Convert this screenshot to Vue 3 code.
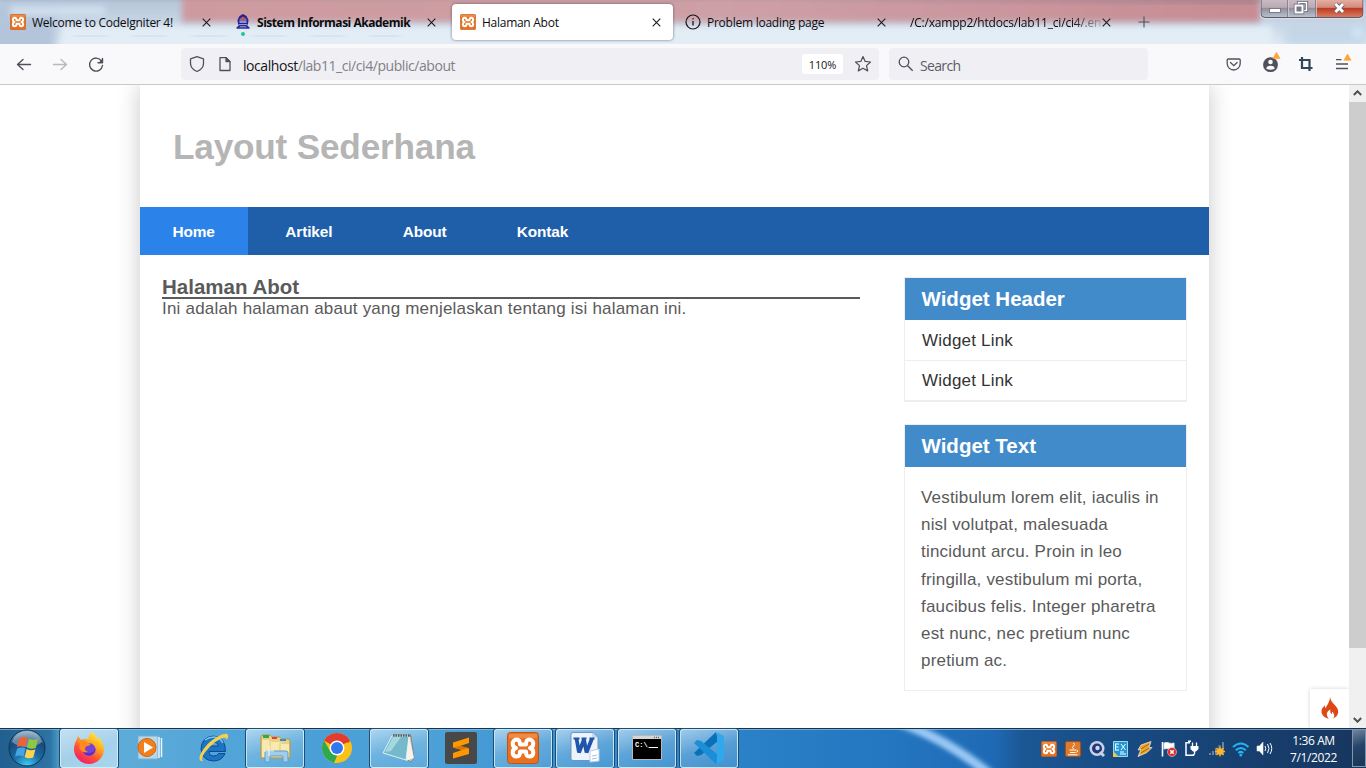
<script setup>
const tabs = [
  { title: 'Welcome to CodeIgniter 4!', icon: 'xampp', cls: 't1' },
  { title: 'Sistem Informasi Akademik', icon: 'campus', cls: 't2' },
  { title: 'Halaman Abot', icon: 'xampp', cls: 't3 active' },
  { title: 'Problem loading page', icon: 'info', cls: 't4' },
  { title: '/C:/xampp2/htdocs/lab11_ci/ci4/.en', icon: '', cls: 't5' },
]
const menu = ['Home', 'Artikel', 'About', 'Kontak']
const apps = [
  { id: 'firefox', open: true, hot: true },
  { id: 'wmp' },
  { id: 'ie' },
  { id: 'explorer', open: true },
  { id: 'chrome' },
  { id: 'notepad', open: true },
  { id: 'sublime' },
  { id: 'xampp', open: true },
  { id: 'word', open: true },
  { id: 'cmd', open: true },
  { id: 'vscode', open: true },
]
</script>

<template>
  <div class="screen">
    <svg width="0" height="0" class="defs">
      <defs>
        <symbol id="xampp" viewBox="0 0 32 32">
          <rect x=".5" y=".5" width="31" height="31" rx="3" fill="#e8701e" stroke="#b9561a" />
          <path d="M2 2h28v4H2z" fill="#f39a5c" opacity=".6" />
          <path d="M13 12.500C13 9 11.700 7.500 9.700 7.500 7.200 7.500 5.700 9.500 5.700 11.500c0 2.500 1.500 4 3.300 4.500-1.800.5-3.300 2-3.300 4.500 0 2.500 1.500 4 4 4s3.300-1.500 3.300-5h6c0 3.500.8 5 3.300 5s4-1.500 4-4c0-2.500-1.500-4-3.300-4.500 1.800-.5 3.300-2 3.300-4.500 0-2-1.500-4-4-4S19 9 19 12.500z" fill="none" stroke="#fff" stroke-width="4" stroke-linejoin="round" />
        </symbol>
      </defs>
    </svg>

    <header class="tabbar">
      <svg class="glass" width="1366" height="44">
        <defs>
          <filter id="b5" x="-20%" y="-60%" width="140%" height="220%"><feGaussianBlur stdDeviation="5" /></filter>
          <filter id="b3" x="-20%" y="-60%" width="140%" height="220%"><feGaussianBlur stdDeviation="3" /></filter>
          <linearGradient id="base" x1="0" x2="0" y1="0" y2="1">
            <stop offset="0" stop-color="#b5c5d8" /><stop offset=".6" stop-color="#cad9e8" /><stop offset="1" stop-color="#dfeaf4" />
          </linearGradient>
          <linearGradient id="red" x1="0" x2="1" y1="0" y2="0">
            <stop offset="0" stop-color="#ce9a9f" /><stop offset=".5" stop-color="#cda0a6" /><stop offset="1" stop-color="#c78c94" />
          </linearGradient>
        </defs>
        <rect width="1366" height="44" fill="url(#base)" />
        <rect x="-10" y="4" width="66" height="50" fill="#b4c5db" filter="url(#b5)" />
        <rect x="62" y="26" width="1210" height="24" fill="#e3edf6" filter="url(#b3)" />
        <rect x="10" y="6" width="95" height="10" fill="#d0deed" filter="url(#b3)" />
        <path d="M182-14H1260V22H182z" fill="url(#red)" filter="url(#b3)" />
        <path d="M0 0H1366V1H0z" fill="#7f8796" opacity=".8" filter="url(#b3)" />
        <path d="M800 0H1260L1255 3z" fill="#75697c" opacity=".65" filter="url(#b3)" />
        <path d="M74 36h30v.5h26v-.5h25v.5h35v-.5h45v.5h45v-.5h50v.5h32v-.5h38" fill="none" stroke="#b8c6d5" stroke-width="4" stroke-dasharray="34 26" opacity=".55" filter="url(#b3)" />
        <path d="M1285 28h81v20h-81z" fill="#b7cde2" opacity=".6" filter="url(#b5)" />
        <circle cx="1357" cy="33" r="5" fill="#d3e8fb" filter="url(#b3)" />
      </svg>
      <div v-for="t in tabs" :key="t.cls" class="tab" :class="t.cls">
        <svg v-if="t.icon === 'xampp'" class="fav" width="16" height="16"><use href="#xampp" /></svg>
        <svg v-else-if="t.icon === 'campus'" class="fav campus" width="16" height="22" viewBox="0 0 16 22">
          <path d="M8 0 11.500 2 13.500 6 13 10 11.500 12H4.500L3 10 2.500 6 4.500 2z" fill="#23238e" />
          <path d="M1.500 13.500 4 11h8l2.500 2.500v1.300h-13z" fill="#2f2f98" />
          <path d="M4.500 5L8 2.500 11.500 5v4h-7z" fill="#6f6fc0" /><circle cx="8" cy="4.800" r="1.800" fill="#e04a3c" />
          <path d="M4.500 8h7M4 10.500h8M5 12.800h6" stroke="#c8c8ef" stroke-width=".7" />
          <circle cx="8" cy="20" r="2" fill="#1fc3a0" />
        </svg>
        <svg v-else-if="t.icon === 'info'" class="fav" width="16" height="16" viewBox="0 0 16 16">
          <circle cx="8" cy="8" r="7" fill="none" stroke="#15141a" stroke-width="1.200" />
          <path d="M8 7v4.500M8 4.200v1.300" stroke="#15141a" stroke-width="1.300" />
        </svg>
        <span class="title">{{ t.title }}</span>
        <svg class="close" width="9" height="9" viewBox="0 0 9 9"><path d="M.7.7l7.600 7.600M8.300.7L.7 8.300" stroke="#1c1b22" stroke-width="1.100" /></svg>
      </div>
      <svg class="plus" width="12" height="12" viewBox="0 0 12 12"><path d="M6 .5v11M.5 6h11" stroke="#4d5260" stroke-width="1.100" /></svg>
      <svg class="winbtns" width="106" height="20" viewBox="0 0 106 20">
        <defs>
          <linearGradient id="wg" x1="0" x2="0" y1="0" y2="1"><stop offset="0" stop-color="#cbbcc5" /><stop offset=".45" stop-color="#bcaab3" /><stop offset=".5" stop-color="#938d9a" /><stop offset="1" stop-color="#bac4d2" /></linearGradient>
          <linearGradient id="wr" x1="0" x2="0" y1="0" y2="1"><stop offset="0" stop-color="#e6b2a6" /><stop offset=".45" stop-color="#d28c7b" /><stop offset=".5" stop-color="#bd3a22" /><stop offset="1" stop-color="#da8066" /></linearGradient>
        </defs>
        <path d="M1-1V13.500q0 4 4 4h51V-1z" fill="url(#wg)" />
        <path d="M56-1v18.500h43q4 0 4-4V-1z" fill="url(#wr)" />
        <path d="M1-1V13.500q0 4 4 4h94q4 0 4-4V-1" fill="none" stroke="#595b68" />
        <path d="M0 0v13.500q0 5 5 5h94q5 0 5-5V0M28.500 0v17M56.500 0v17" fill="none" stroke="#e6dfe5" stroke-width=".8" />
        <path d="M27.700 0v17M55.700 0v17" stroke="#716d7a" stroke-width=".8" />
        <rect x="9.500" y="8.500" width="11" height="4" fill="#fff" stroke="#686878" stroke-width=".8" />
        <path d="M38.500 2.500h8v8h-8z" fill="none" stroke="#5e6070" stroke-width="3.200" /><path d="M38.500 2.500h8v8h-8z" fill="none" stroke="#fff" stroke-width="1.600" />
        <path d="M35.500 5.500h7v7h-7z" fill="#777887" stroke="#5e6070" stroke-width="3.400" /><path d="M35.500 5.500h7v7h-7z" fill="#777887" stroke="#fff" stroke-width="2" />
        <path d="M75.500 4l7.500 8M83 4L75.500 12" stroke="#626475" stroke-width="4.600" /><path d="M75.500 4l7.500 8M83 4L75.500 12" stroke="#fff" stroke-width="2.800" />
      </svg>
    </header>

    <div class="toolbar">
      <svg class="navs" width="181" height="40" viewBox="0 0 181 40" fill="none" stroke-width="1.400" stroke-linecap="round" stroke-linejoin="round">
        <path d="M30.500 20.500H18M23 15.500l-5.500 5 5.500 5" stroke="#50505c" />
        <path d="M53.500 20.500H66M61 15.500l5.500 5-5.500 5" stroke="#b8b8c0" />
        <path d="M101.500 17A6.500 6.500 0 1 0 102.500 21.500M102.500 14.500v4.300h-4.500" stroke="#50505c" />
        <path d="M102.800 14.500v4.500h-4.500z" fill="#50505c" />
      </svg>
      <div class="urlbar">
        <svg width="50" height="32" viewBox="0 0 50 32" fill="none" stroke="#50505c" stroke-width="1.300" stroke-linejoin="round">
          <path d="M16 8.600l6.500 2.200v4.500c0 4-2.700 6.700-6.500 8.200-3.800-1.500-6.500-4.200-6.500-8.200v-4.500z" />
          <path d="M39 9.600h6l4 4v8.900H39z" /><path d="M45 9.600v4h4z" fill="#50505c" />
        </svg>
        <span class="url"><b>localhost</b>/lab11_ci/ci4/public/about</span>
        <span class="zoom">110%</span>
        <svg class="star" width="18" height="18" viewBox="0 0 18 18"><path d="M9 1.500l2.200 4.900 5.300.6-4 3.600 1.200 5.300L9 13.200l-4.700 2.700 1.200-5.300-4-3.600 5.300-.6z" fill="none" stroke="#50505c" stroke-width="1.250" stroke-linejoin="round" /></svg>
      </div>
      <div class="search">
        <svg width="16" height="16" viewBox="0 0 16 16"><circle cx="6" cy="6" r="4.800" fill="none" stroke="#50505c" stroke-width="1.300" /><path d="M9.700 9.700l5 5" stroke="#50505c" stroke-width="1.400" /></svg>
        <span>Search</span>
      </div>
      <svg class="tools" width="140" height="40" viewBox="0 0 140 40" fill="none">
        <path d="M2.200 15h11a1 1 0 0 1 1 1v3.500a6.500 6.500 0 0 1-13 0V16a1 1 0 0 1 1-1zM4.500 18.500l3.300 3.200 3.300-3.200" stroke="#50505c" stroke-width="1.300" stroke-linecap="round" />
        <circle cx="44.500" cy="20.700" r="7.400" fill="#50505c" /><circle cx="44.500" cy="18" r="2.300" fill="#f9f9fb" /><path d="M40.300 24.800q0-3 4.200-3t4.200 3q-4.200 2-8.400 0z" fill="#f9f9fb" />
        <path d="M50.500 8.200l3.600 6.300h-7.200zM121.500 10l3.600 6.300h-7.200z" fill="#ffa436" stroke="#ffa436" stroke-width=".6" stroke-linejoin="round" />
        <path d="M73 16h10.500v11M76 13v11h10.500" stroke="#31485b" stroke-width="2.200" />
        <path d="M110 15.600h5.500M110 20h12M110 24.500h12" stroke="#50505c" stroke-width="1.300" />
      </svg>
    </div>

    <main class="viewport">
      <div class="page">
        <div class="container">
          <h1>Layout Sederhana</h1>
          <nav class="menu">
            <a v-for="(m, i) in menu" :key="m" :class="{ on: i === 0 }">{{ m }}</a>
          </nav>
          <div class="wrapper">
            <section class="content">
              <h2>Halaman Abot</h2>
              <p>Ini adalah halaman abaut yang menjelaskan tentang isi halaman ini.</p>
            </section>
            <aside>
              <div class="widget links">
                <h3>Widget Header</h3>
                <a>Widget Link</a>
                <a>Widget Link</a>
              </div>
              <div class="widget">
                <h3>Widget Text</h3>
                <p>Vestibulum lorem elit, iaculis in<br>nisl volutpat, malesuada<br>tincidunt arcu. Proin in leo<br>fringilla, vestibulum mi porta,<br>faucibus felis. Integer pharetra<br>est nunc, nec pretium nunc<br>pretium ac.</p>
              </div>
            </aside>
          </div>
        </div>
        <div class="debug">
          <svg width="18" height="22" viewBox="0 0 18 22"><path d="M9 0c1 4.500 3 6 5.400 8.700C16.500 11 17.500 13 17.200 15.500c-.3 3-2.600 5-5.200 6 1.200-1.400 1.600-2.600 1-4-.4-1-1-1.500-1-2.700-1.100.6-1.300 1.400-1 2.500-1.500-.9-2.100-2.600-1.600-4.800-2.400 1.200-4 3.300-3.500 5.500.2 1.400 1 2.500 1.900 3.500C3.500 20.500.8 18.300.5 14.900.2 12 2 10.200 3.800 8.300c0 1.400.2 2.200 1.100 2.900C5.200 8.500 8.900 5.500 9 0z" fill="#dd4814" /></svg>
        </div>
      </div>
      <div class="scroll">
        <svg width="9" height="6" viewBox="0 0 9 6"><path d="M.8 5L4.500 1.300 8.200 5" fill="none" stroke="#505050" stroke-width="2" /></svg>
        <div class="thumb"></div>
        <svg width="9" height="6" viewBox="0 0 9 6"><path d="M.8 1l3.700 3.700L8.200 1" fill="none" stroke="#505050" stroke-width="2" /></svg>
      </div>
    </main>

    <footer class="taskbar">
      <svg class="sheen" width="1366" height="40">
        <defs><filter id="b2" x="-20%" y="-50%" width="140%" height="200%"><feGaussianBlur stdDeviation="2.500" /></filter></defs>
        <path d="M898-6Q945 10 990 46" fill="none" stroke="#8fc1f2" stroke-width="9" filter="url(#b2)" />
        <path d="M904-4Q948 14 986 44" fill="none" stroke="#a5d0f8" stroke-width="3" filter="url(#b2)" />
        <path d="M0 .5h1366" stroke="#16324e" /><path d="M0 1.500h1366" stroke="#9cc6e8" opacity=".65" />
      </svg>
      <svg class="start" width="38" height="38" viewBox="0 0 38 38">
        <defs><radialGradient id="orb" cx=".5" cy="1" r="1"><stop offset="0" stop-color="#3fd0f4" /><stop offset=".4" stop-color="#1c6ba5" /><stop offset=".75" stop-color="#174a78" /><stop offset="1" stop-color="#8cacc2" /></radialGradient></defs>
        <circle cx="19" cy="19" r="18" fill="url(#orb)" stroke="#0d3352" />
        <path d="M4 13Q8 2 19 2t15 11q-6 5-15 5T4 13z" fill="#d5e6f0" opacity=".4" />
        <path d="M11 9.500q4.500-2.500 8.500-.5l-2 9q-4-2-8.500.2z" fill="#ee6335" />
        <path d="M21 9.700q4 2 9 .2L27.800 19q-4.500 1.800-8.800-.5z" fill="#92c742" />
        <path d="M9 19.700q4.500-2.200 8.500-.3l-2 8q-4-2-8.500.4z" fill="#46a3e4" />
        <path d="M18.700 20q4 2.200 8.700.4l-2.200 8q-4.500 1.800-8.500-.5z" fill="#ffd34c" />
      </svg>
      <div class="apps">
        <div v-for="a in apps" :key="a.id" class="app" :class="{ open: a.open, hot: a.hot }">
          <svg width="34" height="34" viewBox="0 0 34 34">
            <g v-if="a.id === 'firefox'">
              <defs><linearGradient id="fx" x1=".8" x2=".2" y1="0" y2="1"><stop offset="0" stop-color="#fff24a" /><stop offset=".35" stop-color="#ffae1e" /><stop offset=".65" stop-color="#ff5036" /><stop offset="1" stop-color="#ed1575" /></linearGradient></defs>
              <path d="M20 1c3 2 4.500 4.500 5 7l1.500-2c3.500 4 5.500 8 5.500 12a15 15 0 0 1-30 0c0-3.500 1.400-7 3-10l1-3 3 4c3-1.500 5-1 7.500-1 0-2 1-5 3.500-7z" fill="url(#fx)" />
              <circle cx="17" cy="18.500" r="6.500" fill="#7543d6" /><path d="M11 21q3 4 8 3 5-2 4.500-7-1 4-5 5t-7.500-1z" fill="#592acb" />
              <path d="M5 10q6-2 10 1.500 1.500 1 4 1.300-1 2.200-4.500 2.400-2 1-1.500 3 .5 2 3 2.500-5 2-8-2-1.500-3 0-6z" fill="#ff8a22" />
            </g>
            <g v-else-if="a.id === 'wmp'">
              <path d="M4 5h20v23H4z" fill="#b4d7ec" stroke="#7eadc9" /><path d="M25 6v21M27.500 7v19" stroke="#eaf6fd" stroke-width="1.500" />
              <circle cx="13" cy="16.500" r="9" fill="#f27f1b" stroke="#cf6412" /><path d="M10 11v11l9-5.500z" fill="#fff" />
            </g>
            <g v-else-if="a.id === 'ie'">
              <path d="M29.500 20.500H13q.5 4.500 5 4.500 3 0 4.500-2.500H29Q26 30 17.500 30 6 29.500 5 18 5.500 6 17.500 5 29.500 5.500 29.500 20.500zM13 15h9.500q-.7-4-4.700-4T13 15z" fill="#1b75c4" stroke="#0e4b8e" />
              <path d="M9 9q4-3 9-3 6 0 9 6" fill="none" stroke="#77c7f0" stroke-width="1.500" />
              <path d="M7 30C1 31 3 23 10 15S30 0 32 4c.5 2-.5 4-1.500 5C31 5 25 6 17 13S4 27 7 30z" fill="#f5cf4f" />
            </g>
            <g v-else-if="a.id === 'explorer'">
              <path d="M3 6q0-2 2-2h7l2 2h8l2 2h6q2 0 2 2v17H3z" fill="#ead183" stroke="#b99645" /><path d="M5 4h6v3H5z" fill="#37a54e" /><path d="M14 6h5v2h-5z" fill="#dd4637" /><path d="M22 8h6v2h-6z" fill="#2f91d5" />
              <path d="M4 9h8l2 2h8l2 2h7v13H4z" fill="#f8e9ae" /><path d="M12 9v10M22 12v9" stroke="#e2c87e" />
              <path d="M7 31V21q0-1 1-1h20q2 0 2 2v9h-5v-5q0-1-1-1H13q-1 0-1 1v5z" fill="#9fcdeb" stroke="#5d9ecb" /><path d="M11 15v10M6 20h10" stroke="#fff" opacity=".8" />
            </g>
            <g v-else-if="a.id === 'chrome'">
              <circle cx="17" cy="17" r="15" fill="#fbc116" /><path d="M17 17L4 9.500A15 15 0 0 1 30 9.500z" fill="#e33b2e" /><path d="M17 9.500h13l-1 2H17z" fill="#e33b2e" />
              <path d="M4 9.500L10.500 20.700 17 24.500 16.500 32A15 15 0 0 1 4 9.500z" fill="#2da94f" /><path d="M17 24.500l6.500-3.800L17 32h-3z" fill="#fbc116" /><path d="M10 21l7 4-3.500 6.600" fill="#2da94f" /><circle cx="17" cy="17" r="7.500" fill="#fff" /><circle cx="17" cy="17" r="6" fill="#2f78ed" />
            </g>
            <g v-else-if="a.id === 'notepad'">
              <path d="M12 4l17 1 3 22-3 4-5-3z" fill="#c5c3ba" stroke="#77736a" stroke-width=".7" /><path d="M10 5h17l-3 24L1 22z" fill="#75b9cb" stroke="#dcf2f7" /><path d="M11 6h8L9 20l-6 1z" fill="#b1dee5" opacity=".8" /><path d="M27 5l-3 25 5-2 3-1z" fill="#f4f4ed" /><path d="M11 4.500h18" stroke="#615c4c" stroke-width="2.500" stroke-dasharray="1.500 1" />
            </g>
            <g v-else-if="a.id === 'sublime'">
              <rect x="1" y="1" width="32" height="32" rx="2" fill="#484848" /><path d="M9 11.500L25 6.500v5.500l-9 3 9 2.500v5.500L9 27.500V22l9-3-9-2.500z" fill="#ff9800" /><path d="M9 16.500l9 2.500 7-2-9-2z" fill="#db7600" />
            </g>
            <use v-else-if="a.id === 'xampp'" href="#xampp" x="1" y="1" width="32" height="32" />
            <g v-else-if="a.id === 'word'">
              <path d="M5 1.500h20l5 5v23H5q-2 0-2-2v-24q0-2 2-2z" fill="#edf3fb" stroke="#6e93c4" /><path d="M24 2v5h6" fill="#c6d9ee" />
              <path d="M8.500 7.500l2.500 14 5-13 2.500 13 5.500-14" fill="none" stroke="#1f55ab" stroke-width="3.800" stroke-linejoin="bevel" /><path d="M5.500 7.500h6M13.500 7.500h5M21.500 7.500h5" stroke="#1f55ab" stroke-width="1.800" />
              <path d="M22 20l9-2v12l-9 1z" fill="#fff" stroke="#b9cde6" /><path d="M24 25l5-1M24 28l5-1" stroke="#a6c1e3" />
            </g>
            <g v-else-if="a.id === 'cmd'">
              <path d="M2.500 4.500h29v24h-29z" fill="#000" stroke="#b8b8b8" /><path d="M3 5h28v3H3z" fill="#d5d5d5" /><path d="M24 6.500h5" stroke="#567" stroke-width="1.500" stroke-dasharray="1 1" />
              <text x="5" y="16" font-family="Liberation Mono" font-size="7" font-weight="700" fill="#fff">C:\_</text><path d="M19 16.500h9" stroke="#fff" />
            </g>
            <g v-else>
              <path d="M24 1L2 22l3 3 4-1L26 10z" fill="#0871b8" /><path d="M24 33L2 12l3-3 4 1 17 14z" fill="#1c8ed8" /><path d="M24 1l8 4v24l-8 4q1-.5 1-2V3q0-1.500-1-2z" fill="#2fa8ee" />
            </g>
          </svg>
        </div>
      </div>
      <svg class="tray" width="234" height="20" viewBox="0 0 234 20">
        <use href="#xampp" x="0" y="2" width="16" height="16" />
        <rect x="24.500" y="2.500" width="15" height="15" rx="1.500" fill="#df7a2a" stroke="#a94e17" /><path d="M32.500 4q2 1.500 0 3t0 3M28.500 11h6.500M29 13.500h5.500M27 15.800h9.500M35.500 11q2.500.3 0 2.500" stroke="#fff" fill="none" stroke-width="1" />
        <circle cx="56" cy="9.500" r="7.500" fill="#c9d1e9" /><circle cx="56" cy="9.500" r="5" fill="#263775" /><circle cx="56.500" cy="9" r="2.200" fill="#c5dbfa" /><path d="M59 13l4 4" stroke="#c9d1e9" stroke-width="3" />
        <path d="M72.500 2.500h14v15h-14z" fill="#2297d8" stroke="#9bd9f5" /><path d="M74.500 5H78M74.500 8h3M74.500 11H78M74.500 4.500v7M80 5l4.500 6M84.500 5L80 11M79 15h6M79 13h4" stroke="#fff" stroke-width="1" /><path d="M72 12l6 6h-6z" fill="#ecc752" />
        <path d="M110 2.500L100 6l-3 5 3-.5-3 7 9-4 5-5-3 .2z" fill="#f4a623" stroke="#dfe6ea" stroke-width=".8" /><path d="M108 5l-8 5M108 9l-8 5" stroke="#8d5c22" stroke-width=".9" />
        <path d="M121.500 3v14.500" stroke="#fff" stroke-width="1.600" /><path d="M123 4q3-1 5 0t5 0v6q-3 1-5 0t-5 0z" fill="#fff" stroke="#dde8f2" /><circle cx="131" cy="13" r="4.500" fill="#d82c31" stroke="#f6d5d5" stroke-width=".6" /><path d="M129.300 11.300l3.500 3.500M132.800 11.300l-3.500 3.500" stroke="#fff" stroke-width="1.400" />
        <path d="M149 3.700h-4v12.600h7.500V15M147 2.200h3" fill="none" stroke="#fff" stroke-width="1.500" /><path d="M149.500 7h8v3l-2.500 2.500h-3L149.500 10z" fill="#fff" /><path d="M151.500 3.500V7M155.500 3.500V7M153.500 12v3.500" stroke="#fff" stroke-width="1.300" />
        <path d="M169 16v-2M172 16v-4M175 16V9M178.500 16V6M182 16V3" stroke="#6c8498" stroke-width="2" /><circle cx="179" cy="12.500" r="3.300" fill="#ffb526" /><path d="M179 7.500v10M174 12.500h10M175.500 9l7 7M182.500 9l-7 7" stroke="#ffb526" stroke-width="1.300" />
        <g fill="none" stroke="#22b4f5" stroke-width="2"><path d="M192 8q8-7 15.500 0" /><path d="M194.800 11.300q5-4.500 10 0" /><path d="M197.300 14q2.500-2.300 5 0" /></g><circle cx="199.800" cy="16" r="1.500" fill="#22b4f5" />
        <path d="M216 7h2.500l3.500-4v13l-3.500-4H216z" fill="#fff" stroke="#dfeaf3" stroke-width=".6" /><path d="M224 7q1.500 2.500 0 5M226.500 5q3 4.500 0 9M229 4q3.500 5.500 0 11" fill="none" stroke="#fff" stroke-width="1" />
      </svg>
      <div class="clock"><span>1:36 AM</span><span>7/1/2022</span></div>
      <div class="desk"></div>
    </footer>
  </div>
</template>

<style>
html, body { margin: 0; overflow: hidden; background: #fff; }
</style>

<style scoped>
* { box-sizing: border-box; margin: 0; padding: 0; }
svg { display: block; flex: none; }
.defs { position: absolute; }
.screen { width: 1366px; height: 768px; display: flex; flex-direction: column; overflow: hidden; background: #fff; font-family: "Open Sans", "Noto Sans", sans-serif; }
.tabbar { position: relative; height: 44px; flex: none; display: flex; gap: 4px; padding: 4px 0 0 2px; overflow: hidden; }
.glass { position: absolute; left: 0; top: 0; }
.tab { position: relative; width: 221px; height: 36px; flex: none; display: flex; align-items: center; padding: 0 12px 0 8px; border-radius: 4px; font-size: 12px; color: #0c0c0d; }
.tab.active { background: #fff; box-shadow: 0 0 3px rgba(60, 40, 60, .65); }
.fav { margin-right: 6px; }
.campus { margin-top: 6px; }
.title { flex: 1; white-space: nowrap; padding-top: 1px; }
.t1 .title { letter-spacing: -.27px; }
.t2 .title { font-weight: 700; letter-spacing: -.48px; }
.t3 .title { letter-spacing: -.27px; }
.t4 .title { letter-spacing: -.25px; }
.t5 .title { letter-spacing: -.2px; mask-image: linear-gradient(90deg, #000 84%, transparent 102%); }
.plus { position: relative; margin: 12px 0 0 11px; }
.winbtns { position: absolute; right: 0; top: 0; }
.toolbar { height: 41px; flex: none; display: flex; align-items: center; background: #f9f9fb; border-bottom: 1px solid #c8c8cd; }
.urlbar { width: 698px; height: 32px; border-radius: 4px; background: #f0f0f4; display: flex; align-items: center; }
.url { flex: 1; margin-left: 12px; padding-top: 2px; font-size: 14px; color: #808087; letter-spacing: -.44px; }
.url b { font-weight: 400; color: #15141a; }
.zoom { width: 41px; height: 20px; border-radius: 3px; background: #fff; font-size: 11px; line-height: 21px; text-align: center; color: #15141a; letter-spacing: -.1px; }
.star { margin: 0 7px 0 11px; }
.search { width: 259px; height: 32px; margin-left: 10px; padding-left: 9px; border-radius: 4px; background: #f0f0f4; display: flex; align-items: center; gap: 6px; font-size: 14px; color: #5b5b66; letter-spacing: -.65px; }
.search span { padding-top: 2px; }
.tools { margin-left: 78px; }
.viewport { height: 643px; flex: none; display: flex; overflow: hidden; font-family: "Liberation Sans", Arial, sans-serif; color: #5a5a5a; }
.page { position: relative; width: 1349px; overflow: hidden; background: #fff; }
.container { width: 1069px; height: 700px; margin-left: 140px; background: #fff; box-shadow: 0 0 22px rgba(0, 0, 0, .22); }
h1 { height: 122px; padding: 41px 33px 0; font-size: 35.2px; line-height: 42px; color: #b5b5b5; letter-spacing: -.2px; }
.menu { height: 48px; display: flex; gap: 4.300px; background: #1f5faa; }
.menu a { padding: 0 33px; font-size: 15.4px; line-height: 49px; font-weight: 700; color: #fff; letter-spacing: -.12px; }
.menu a:first-child { width: 108px; padding-left: 32.500px; }
.menu .on { background: #2b83ea; }
.wrapper { display: flex; justify-content: space-between; padding: 22px 22px 0; }
.content { width: 698px; }
h2 { height: 22px; font-size: 20.500px; line-height: 19px; border-bottom: 2px solid #5a5a5a; }
.content p { font-size: 17px; line-height: 19px; letter-spacing: .2px; }
aside { width: 283px; }
.widget { border: 1px solid #eee; margin-bottom: 22px; }
h3 { height: 42px; padding-left: 16.500px; background: #428bca; color: #fff; font-size: 20.500px; line-height: 42px; }
.links a { display: block; height: 40px; padding-left: 17px; border-bottom: 1px solid #eee; font-size: 17px; line-height: 40px; letter-spacing: .2px; color: #333; }
.links a:nth-of-type(1) { height: 41px; line-height: 41px; }
.widget p { padding: 17px 0 16px 16px; font-size: 17px; line-height: 27.200px; letter-spacing: .19px; white-space: nowrap; }
.debug { position: absolute; right: 0; bottom: 0; width: 39px; height: 39px; background: #fff; box-shadow: 0 0 4px rgba(0, 0, 0, .18); display: flex; justify-content: center; padding-top: 8px; }
.scroll { width: 17px; background: #f0f0f0; display: flex; flex-direction: column; align-items: center; padding: 5px 0; }
.thumb { width: 17px; height: 546px; margin: 6px 0 auto; background: #cdcdcd; }
.taskbar { position: relative; height: 40px; flex: none; display: flex; background: linear-gradient(90deg, #205f8f 0, #2c74a5 50px, #57a6d2 62px, #5cabd9 130px, #4aa0d6 300px, #4da1d8 430px, #358dce 600px, #2980c6 760px, #2375c0 900px, #1f69b4 995px, #1b5795 1022px, #184d86 1100px, #173f6f 1250px, #17365d 100%); }
.sheen { position: absolute; left: 0; top: 0; }
.start { position: relative; margin: 1px 14px 0 8px; }
.apps { position: relative; display: flex; gap: 4px; }
.app { width: 58px; height: 39px; margin-top: 1px; display: flex; justify-content: center; padding-top: 2px; border-radius: 3px; }
.open { border: 1px solid rgba(220, 240, 252, .8); box-shadow: 0 0 0 1px #1d4d73; background: linear-gradient(165deg, rgba(235, 247, 255, .6), rgba(190, 222, 242, .3) 50%, rgba(150, 205, 238, .2)); padding-top: 1px; }
.hot { background: linear-gradient(160deg, rgba(255, 255, 255, .65), rgba(225, 242, 252, .55) 55%, rgba(210, 235, 250, .65)); }
.tray { position: relative; margin: 11px 0 0 auto; }
.clock { position: relative; width: 77px; padding-top: 4px; display: flex; flex-direction: column; align-items: center; font-size: 12px; line-height: 17px; color: #fff; letter-spacing: -.4px; }
.desk { position: relative; width: 14px; height: 38px; margin-top: 1px; border: 1px solid #8195ad; background: linear-gradient(160deg, #71849d, #26456a 45%, #1a3658); }
</style>
